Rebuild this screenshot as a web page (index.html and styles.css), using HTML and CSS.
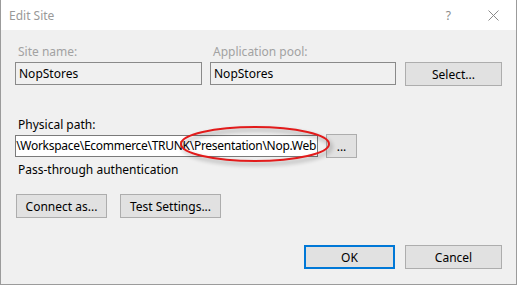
FILE: index.html
```html
<!DOCTYPE html>
<html lang="en">
<head>
  <meta charset="UTF-8">
  <title>Edit Site</title>
  <link rel="stylesheet" href="styles.css">
</head>
<body>
  <div class="window">
    <div class="titlebar">
      <span class="title">Edit Site</span>
      <span class="help">?</span>
      <svg class="close" width="11" height="11" viewBox="0 0 11 11">
        <path d="M0.5 0.5 L10.5 10.5 M10.5 0.5 L0.5 10.5" stroke="#8a8a8a" stroke-width="1" fill="none"/>
      </svg>
    </div>

    <div class="content">
      <div class="site-row">
        <div class="field site-field">
          <label class="label disabled">Site name:</label>
          <div class="textbox readonly">NopStores</div>
        </div>
        <div class="field pool-field">
          <label class="label disabled">Application pool:</label>
          <div class="textbox readonly">NopStores</div>
        </div>
        <button class="btn select-btn">Select...</button>
      </div>

      <label class="label path-label">Physical path:</label>
      <div class="path-row">
        <div class="textbox path-box"><span class="path-text">\Workspace\Ecommerce\TRUNK\Presentation\Nop.Web</span></div>
        <button class="btn browse-btn">...</button>
      </div>
      <div class="auth">Pass-through authentication</div>

      <div class="action-row">
        <button class="btn connect-btn">Connect as...</button>
        <button class="btn test-btn">Test Settings...</button>
      </div>

      <div class="footer">
        <button class="btn ok-btn">OK</button>
        <button class="btn cancel-btn">Cancel</button>
      </div>

      <!-- red highlight drawn over the path -->
      <svg class="mark" width="162" height="46" viewBox="0 0 162 46">
        <ellipse cx="78" cy="20" rx="74" ry="17" fill="none" stroke="#e21b1b" stroke-width="2"/>
      </svg>
    </div>
  </div>
</body>
</html>
```

FILE: styles.css
```css
* { box-sizing: border-box; }
body { margin: 0; background: #fff; font-family: "Noto Sans", "Segoe UI", sans-serif; font-size: 12px; color: #000; }

.window { position: relative; width: 517px; height: 285px; border: 1px solid #9b9b9b; border-top: none; background: #f0f0f0; }

.titlebar { height: 30px; background: #fff; display: flex; align-items: center; padding-left: 8px; }
.title { color: #999; font-size: 12px; flex: 1; }
.help { color: #8a8a8a; font-size: 12px; margin-right: 37px; }
.close { margin-right: 17px; }

.content { padding: 14px 14px 0 14px; }

.label { display: block; line-height: 15px; padding-left: 3px; }
.label.disabled { color: #a2a2a2; }

.site-row { display: flex; align-items: flex-end; }
.field { display: flex; flex-direction: column; gap: 3px; }
.site-field { width: 187px; }
.pool-field { width: 186px; margin-left: 8px; }

.textbox { height: 23px; border: 1px solid #7a7a7a; background: #fff; padding: 0 3px; line-height: 21px; white-space: nowrap; overflow: hidden; }
.textbox.readonly { background: #f0f0f0; border-color: #8a8a8a; }

.btn { font-family: inherit; font-size: 12px; color: #000; height: 24px; background: #e1e1e1; border: 1px solid #adadad; padding: 0; }
.select-btn { width: 97px; margin-left: 9px; margin-bottom: -1px; }

.path-label { margin-top: 32px; }
.path-row { display: flex; align-items: center; margin-top: 2px; }
.path-box { width: 303px; height: 22px; line-height: 20px; display: flex; justify-content: flex-end; padding: 0 1px; }
.path-text { flex-shrink: 0; letter-spacing: -0.28px; }
.browse-btn { width: 31px; margin-left: 8px; }

.auth { margin-top: 4px; line-height: 15px; padding-left: 3px; }

.action-row { display: flex; margin-top: 17px; padding-left: 1px; }
.connect-btn { width: 91px; }
.test-btn { width: 101px; margin-left: 13px; }

.footer { display: flex; justify-content: flex-end; margin-top: 27px; }
.ok-btn { width: 91px; border: 2px solid #0078d7; }
.cancel-btn { width: 97px; margin-left: 10px; }

.mark { position: absolute; left: 176px; top: 124px; filter: drop-shadow(2px 3px 2px rgba(0, 0, 0, 0.35)); }
```
